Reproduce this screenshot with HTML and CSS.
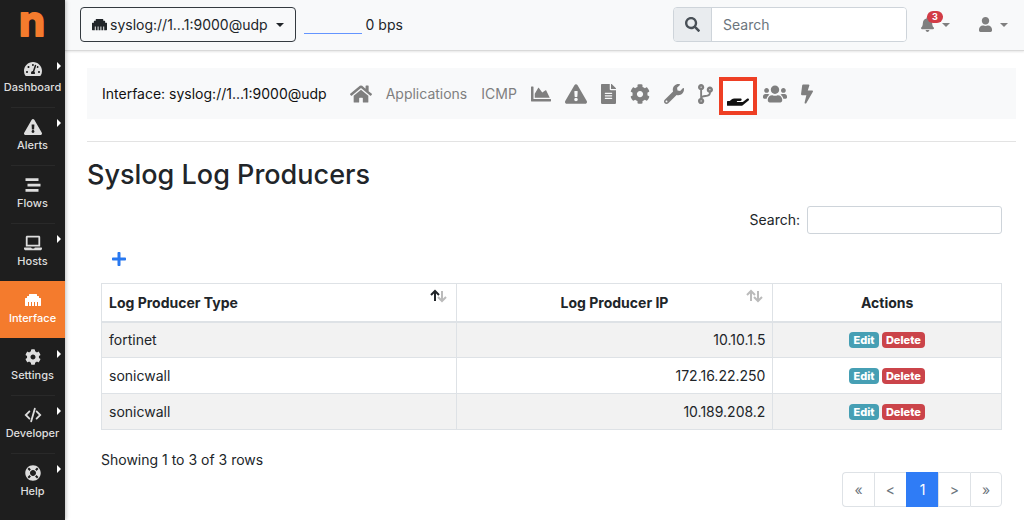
FILE: index.html
```html
<!DOCTYPE html>
<html lang="en">
<head>
  <meta charset="UTF-8">
  <meta name="viewport" content="width=device-width, initial-scale=1">
  <title>Syslog Log Producers</title>
  <link rel="stylesheet" href="styles.css">
</head>
<body>

  <!-- shared icons -->
  <svg class="sprite" aria-hidden="true">
    <symbol id="ethernet" viewBox="0 0 512 512"><path d="M496 192h-48v-48c0-8.800-7.200-16-16-16h-48V80c0-8.800-7.200-16-16-16H144c-8.800 0-16 7.200-16 16v48H80c-8.800 0-16 7.200-16 16v48H16c-8.800 0-16 7.200-16 16v224c0 8.800 7.200 16 16 16h80V320h32v128h64V320h32v128h64V320h32v128h64V320h32v128h80c8.800 0 16-7.200 16-16V208c0-8.800-7.200-16-16-16z"/></symbol>
    <symbol id="warning" viewBox="0 0 576 512"><path d="M569.517 440.013C587.975 472.007 564.806 512 527.940 512H48.054c-36.937 0-59.999-40.055-41.577-71.987L246.423 23.985c18.467-32.009 64.720-31.951 83.154 0l239.940 416.028zM288 354c-25.405 0-46 20.595-46 46s20.595 46 46 46 46-20.595 46-46-20.595-46-46-46zm-43.673-165.346l7.418 136c.347 6.364 5.609 11.346 11.982 11.346h48.546c6.373 0 11.635-4.982 11.982-11.346l7.418-136c.375-6.874-5.098-12.654-11.982-12.654h-63.383c-6.884 0-12.356 5.780-11.981 12.654z"/></symbol>
    <symbol id="cog" viewBox="0 0 512 512"><path d="M487.400 315.700l-42.600-24.600c4.300-23.200 4.300-47 0-70.200l42.600-24.600c4.900-2.800 7.100-8.600 5.500-14-11.100-35.600-30-67.800-54.700-94.600-3.800-4.100-10-5.100-14.800-2.300L380.800 110c-17.900-15.400-38.500-27.300-60.800-35.100V25.800c0-5.600-3.900-10.500-9.400-11.700-36.700-8.200-74.300-7.800-109.200 0-5.500 1.200-9.400 6.100-9.400 11.700V75c-22.200 7.900-42.800 19.800-60.800 35.100L88.700 85.500c-4.900-2.800-11-1.900-14.800 2.300-24.700 26.700-43.600 58.900-54.700 94.600-1.700 5.400.6 11.200 5.500 14L67.300 221c-4.300 23.200-4.300 47 0 70.200l-42.600 24.600c-4.900 2.800-7.100 8.600-5.500 14 11.100 35.600 30 67.800 54.700 94.600 3.800 4.100 10 5.100 14.800 2.300l42.600-24.600c17.900 15.400 38.500 27.300 60.800 35.100v49.200c0 5.600 3.900 10.500 9.400 11.700 36.700 8.200 74.300 7.800 109.200 0 5.500-1.200 9.400-6.100 9.400-11.700v-49.200c22.200-7.900 42.800-19.800 60.800-35.100l42.600 24.600c4.900 2.800 11 1.900 14.800-2.300 24.700-26.700 43.600-58.900 54.700-94.600 1.500-5.500-.7-11.300-5.600-14.100zM256 336c-44.100 0-80-35.900-80-80s35.900-80 80-80 80 35.900 80 80-35.900 80-80 80z"/></symbol>
    <symbol id="sort" viewBox="0 0 18 14"><path class="up" d="M5 12V2M1 6l4-4 4 4"/><path class="down" d="M12 2v10M8 8l4 4 4-4"/></symbol>
  </svg>

  <aside class="sidebar">
    <a class="logo" href="#"><svg viewBox="0 0 65 50"><text x="32" y="36">n</text></svg></a>
    <nav>
      <ul class="menu">
        <li class="has-sub"><a href="#">
          <svg viewBox="0 0 576 512"><path d="M288 32C128.940 32 0 160.940 0 320c0 52.800 14.250 102.260 39.060 144.800 5.610 9.620 16.300 15.200 27.440 15.200h443c11.140 0 21.830-5.580 27.440-15.200C561.750 422.260 576 372.800 576 320c0-159.060-128.940-288-288-288zm0 64c14.710 0 26.580 10.130 30.320 23.650-1.110 2.260-2.640 4.230-3.450 6.670l-9.220 27.670c-5.130 3.490-10.970 6.010-17.640 6.010-17.670 0-32-14.330-32-32S270.330 96 288 96zM96 384c-17.670 0-32-14.330-32-32s14.330-32 32-32 32 14.330 32 32-14.330 32-32 32zm48-160c-17.670 0-32-14.330-32-32s14.330-32 32-32 32 14.330 32 32-14.330 32-32 32zm246.770-72.410l-61.330 184C343.130 347.330 352 364.540 352 384c0 11.720-3.380 22.550-8.880 32H232.880c-5.500-9.450-8.880-20.280-8.880-32 0-33.940 26.500-61.430 59.900-63.590l61.340-184.010c4.170-12.560 17.730-19.450 30.360-15.170 12.570 4.190 19.350 17.790 15.170 30.360zm14.660 57.200l15.520-46.550c3.470-1.290 7.130-2.230 11.050-2.230 17.670 0 32 14.330 32 32s-14.330 32-32 32c-11.380-.01-20.890-6.280-26.570-15.220zM480 384c-17.670 0-32-14.330-32-32s14.330-32 32-32 32 14.330 32 32-14.330 32-32 32z"/></svg>
          Dashboard</a></li>
        <li class="has-sub line"><a href="#"><svg><use href="#warning"/></svg>Alerts</a></li>
        <li class="line"><a href="#">
          <svg viewBox="0 0 512 512"><path d="M16 40h416v88H16zM80 212h416v88H80zM16 384h416v88H16z"/></svg>
          Flows</a></li>
        <li class="has-sub line"><a href="#">
          <svg viewBox="0 0 640 512"><path d="M624 416H381.540c-.74 19.810-14.710 32-32.740 32H288c-18.690 0-33.020-17.470-32.770-32H16c-8.800 0-16 7.200-16 16v16c0 35.200 28.800 64 64 64h512c35.200 0 64-28.800 64-64v-16c0-8.800-7.200-16-16-16zM576 48c0-26.400-21.600-48-48-48H112C85.600 0 64 21.600 64 48v336h512V48zm-64 272H128V64h384v256z"/></svg>
          Hosts</a></li>
        <li class="active"><a href="#"><svg><use href="#ethernet"/></svg>Interface</a></li>
        <li class="has-sub"><a href="#"><svg><use href="#cog"/></svg>Settings</a></li>
        <li class="has-sub line"><a href="#">
          <svg class="stroked" viewBox="0 0 20 16"><path d="M6 4L2 8l4 4M14 4l4 4-4 4M12 1L8 15"/></svg>
          Developer</a></li>
        <li class="has-sub line"><a href="#">
          <svg viewBox="0 0 512 512"><path d="M256 8C119.033 8 8 119.033 8 256s111.033 248 248 248 248-111.033 248-248S392.967 8 256 8zm173.696 119.559l-63.399 63.399c-10.987-18.559-26.670-34.252-45.255-45.255l63.399-63.399a218.396 218.396 0 0 1 45.255 45.255zM256 352c-53.019 0-96-42.981-96-96s42.981-96 96-96 96 42.981 96 96-42.981 96-96 96zM127.559 82.304l63.399 63.399c-18.559 10.987-34.252 26.670-45.255 45.255l-63.399-63.399a218.372 218.372 0 0 1 45.255-45.255zM82.304 384.441l63.399-63.399c10.987 18.559 26.670 34.252 45.255 45.255l-63.399 63.399a218.396 218.396 0 0 1-45.255-45.255zm302.137 45.255l-63.399-63.399c18.559-10.987 34.252-26.670 45.255-45.255l63.399 63.399a218.403 218.403 0 0 1-45.255 45.255z"/></svg>
          Help</a></li>
      </ul>
    </nav>
  </aside>

  <div class="page">
    <header class="topbar">
      <button type="button" class="iface-btn"><svg><use href="#ethernet"/></svg>syslog://1...1:9000@udp<span class="caret"></span></button>
      <div class="traffic"><span class="chart"></span>0 bps</div>
      <form class="search">
        <label for="search"><svg viewBox="0 0 512 512" aria-label="Search"><path d="M505 442.700L405.300 343c-4.500-4.500-10.600-7-17-7H372c27.600-35.300 44-79.700 44-128C416 93.100 322.900 0 208 0S0 93.100 0 208s93.100 208 208 208c48.300 0 92.700-16.400 128-44v16.300c0 6.400 2.500 12.500 7 17l99.700 99.700c9.400 9.400 24.600 9.400 33.900 0l28.300-28.300c9.400-9.400 9.400-24.600.1-34zM208 336c-70.700 0-128-57.200-128-128 0-70.700 57.200-128 128-128 70.700 0 128 57.200 128 128 0 70.700-57.200 128-128 128z"/></svg></label>
        <input type="text" id="search" placeholder="Search">
      </form>
      <button type="button" class="icon-btn bell" aria-label="Notifications">
        <svg viewBox="0 0 448 512"><path d="M224 512c35.320 0 63.970-28.650 63.970-64H160.030c0 35.350 28.650 64 63.970 64zm215.390-149.710c-19.320-20.760-55.470-51.990-55.470-154.290 0-77.700-54.480-139.900-127.940-155.160V32c0-17.670-14.320-32-31.980-32s-31.980 14.330-31.980 32v20.840C118.560 68.100 64.080 130.300 64.080 208c0 102.300-36.150 133.530-55.470 154.290-6 6.450-8.660 14.160-8.610 21.710.11 16.400 12.980 32 32.100 32h383.800c19.120 0 32-15.600 32.100-32 .05-7.550-2.610-15.270-8.610-21.710z"/></svg>
        <span class="count">3</span><span class="caret"></span>
      </button>
      <button type="button" class="icon-btn" aria-label="Account">
        <svg viewBox="0 0 448 512"><path d="M224 256c70.700 0 128-57.300 128-128S294.700 0 224 0 96 57.300 96 128s57.300 128 128 128zm89.600 32h-16.700c-22.200 10.200-46.900 16-72.900 16s-50.600-5.800-72.900-16h-16.700C60.200 288 0 348.200 0 422.400V464c0 26.500 21.500 48 48 48h352c26.500 0 48-21.500 48-48v-41.600c0-74.200-60.200-134.400-134.400-134.400z"/></svg>
        <span class="caret"></span>
      </button>
    </header>

    <main>
      <nav class="tabs">
        <span class="title">Interface: syslog://1...1:9000@udp</span>
        <a href="#" aria-label="Home"><svg class="w22" viewBox="0 0 576 512"><path d="M280.370 148.260L96 300.110V464a16 16 0 0 0 16 16l112.060-.29a16 16 0 0 0 15.920-16V368a16 16 0 0 1 16-16h64a16 16 0 0 1 16 16v95.640a16 16 0 0 0 16 16.050L464 480a16 16 0 0 0 16-16V300L295.670 148.260a12.190 12.190 0 0 0-15.300 0zM571.600 251.470L488 182.560V44.050a12 12 0 0 0-12-12h-56a12 12 0 0 0-12 12v72.610L318.470 43a48 48 0 0 0-61 0L4.340 251.470a12 12 0 0 0-1.600 16.900l25.500 31A12 12 0 0 0 45.150 301l235.220-193.740a12.190 12.190 0 0 1 15.300 0L530.900 301a12 12 0 0 0 16.900-1.600l25.500-31a12 12 0 0 0-1.700-16.930z"/></svg></a>
        <a href="#">Applications</a>
        <a href="#">ICMP</a>
        <a href="#" aria-label="Charts"><svg class="w20" viewBox="0 0 512 512"><path d="M500 384c6.600 0 12 5.400 12 12v40c0 6.600-5.400 12-12 12H12c-6.600 0-12-5.400-12-12V76c0-6.600 5.400-12 12-12h40c6.600 0 12 5.400 12 12v308h436zM372.700 159.500L288 216l-85.300-113.700c-5.100-6.800-15.500-6.300-19.900 1L96 248v104h384l-89.900-187.800c-3.200-6.500-11.400-8.700-17.400-4.700z"/></svg></a>
        <a href="#" aria-label="Alerts"><svg class="w22"><use href="#warning"/></svg></a>
        <a href="#" aria-label="Reports"><svg class="w15" viewBox="0 0 384 512"><path d="M224 136V0H24C10.700 0 0 10.700 0 24v464c0 13.300 10.700 24 24 24h336c13.300 0 24-10.700 24-24V160H248c-13.200 0-24-10.800-24-24zm64 236c0 6.600-5.400 12-12 12H108c-6.600 0-12-5.400-12-12v-8c0-6.600 5.400-12 12-12h168c6.600 0 12 5.400 12 12v8zm0-64c0 6.600-5.400 12-12 12H108c-6.600 0-12-5.400-12-12v-8c0-6.600 5.400-12 12-12h168c6.600 0 12 5.400 12 12v8zm0-72v8c0 6.600-5.400 12-12 12H108c-6.600 0-12-5.400-12-12v-8c0-6.600 5.400-12 12-12h168c6.600 0 12 5.400 12 12zm96-114.100v6.100H256V0h6.100c6.400 0 12.500 2.500 17 7l97.900 98c4.500 4.500 7 10.600 7 16.900z"/></svg></a>
        <a href="#" aria-label="Settings"><svg class="w20"><use href="#cog"/></svg></a>
        <a href="#" aria-label="Tools"><svg class="w20" viewBox="0 0 512 512"><path d="M507.730 109.100c-2.240-9.030-13.540-12.090-20.120-5.510l-74.360 74.360-67.880-11.310-11.310-67.880 74.360-74.360c6.620-6.620 3.430-17.900-5.660-20.160-47.380-11.740-99.550.91-136.580 37.930-39.640 39.640-50.550 97.100-34.050 147.200L18.740 402.760c-24.990 24.990-24.990 65.510 0 90.500 24.990 24.990 65.510 24.990 90.500 0l213.210-213.210c50.120 16.710 107.470 5.680 147.370-34.220 37.070-37.070 49.700-89.320 37.910-136.730zM64 472c-13.250 0-24-10.750-24-24 0-13.260 10.750-24 24-24s24 10.740 24 24c0 13.250-10.750 24-24 24z"/></svg></a>
        <a href="#" aria-label="Disaggregation"><svg class="w15" viewBox="0 0 384 512"><path d="M384 144c0-44.200-35.800-80-80-80s-80 35.800-80 80c0 36.400 24.300 67.100 57.500 76.800-.6 16.100-4.200 28.500-11 36.900-15.400 19.200-49.300 22.400-85.200 25.700-28.200 2.600-57.400 5.400-81.300 16.900v-144c32.500-10.200 56-40.500 56-76.300 0-44.200-35.800-80-80-80S0 35.800 0 80c0 35.800 23.500 66.100 56 76.300v199.300C23.500 365.900 0 396.200 0 432c0 44.200 35.800 80 80 80s80-35.800 80-80c0-34-21.200-63.100-51.200-74.600 3.100-5.200 7.800-9.800 14.900-13.400 16.200-8.200 40.400-10.400 66.100-12.800 42.200-3.900 90-8.400 118.200-43.400 14-17.400 21.100-39.800 21.600-67.900 31.600-10.800 54.400-40.700 54.400-75.900zM80 64c8.800 0 16 7.200 16 16s-7.200 16-16 16-16-7.200-16-16 7.200-16 16-16zm0 384c-8.800 0-16-7.200-16-16s7.200-16 16-16 16 7.200 16 16-7.200 16-16 16zm224-320c8.800 0 16 7.200 16 16s-7.200 16-16 16-16-7.200-16-16 7.200-16 16-16z"/></svg></a>
        <a href="#" class="current" aria-label="Log producers"><svg class="w22" viewBox="0 0 576 512"><path d="M565.300 328.100c-11.800-10.700-30.200-10-42.600 0L430.300 402c-11.300 9.100-25.400 14-40 14H272c-8.800 0-16-7.200-16-16s7.200-16 16-16h78.300c15.900 0 30.700-10.900 33.300-26.600 3.300-20-12.100-37.400-31.600-37.400H192c-27 0-53.100 9.300-74.100 26.300L71.400 384H16c-8.800 0-16 7.200-16 16v96c0 8.800 7.200 16 16 16h356.800c14.500 0 28.600-4.900 40-14L564 377c15.200-12.100 16.400-35.300 1.300-48.900z"/></svg></a>
        <a href="#" aria-label="Pools"><svg class="w24" viewBox="0 0 640 512"><path d="M96 224c35.300 0 64-28.700 64-64s-28.700-64-64-64-64 28.700-64 64 28.700 64 64 64zm448 0c35.300 0 64-28.700 64-64s-28.700-64-64-64-64 28.700-64 64 28.700 64 64 64zm32 32h-64c-17.600 0-33.500 7.100-45.100 18.600 40.300 22.100 68.900 62 75.100 109.400h66c17.700 0 32-14.300 32-32v-32c0-35.300-28.700-64-64-64zm-256 0c61.900 0 112-50.100 112-112S381.900 32 320 32 208 82.100 208 144s50.100 112 112 112zm76.800 32h-8.300c-20.800 10-43.900 16-68.500 16s-47.600-6-68.500-16h-8.300C179.600 288 128 339.600 128 403.200V432c0 26.500 21.500 48 48 48h288c26.500 0 48-21.500 48-48v-28.800c0-63.600-51.600-115.200-115.200-115.200zm-223.700-13.400C161.500 263.100 145.600 256 128 256H64c-35.300 0-64 28.700-64 64v32c0 17.700 14.300 32 32 32h65.900c6.300-47.400 34.900-87.300 75.200-109.400z"/></svg></a>
        <a href="#" aria-label="Scripts"><svg class="w12" viewBox="0 0 320 512"><path d="M296 160H180.600l42.600-129.800C227.200 15 215.700 0 200 0H56C44 0 33.800 8.900 32.200 20.800l-32 240C-1.700 275.200 9.500 288 24 288h118.700L96.600 482.500c-3.600 15.200 8 29.500 23.300 29.500 8.400 0 16.400-4.400 20.800-12l176-304c9.300-15.900-2.200-36-20.700-36z"/></svg></a>
      </nav>
      <hr>
      <h2>Syslog Log Producers</h2>

      <section class="content">
        <div class="filter">
          <label for="filter">Search:</label>
          <input type="text" id="filter">
        </div>
        <button type="button" class="add" aria-label="Add producer"><svg viewBox="0 0 448 512"><path d="M416 208H272V64c0-17.670-14.330-32-32-32h-32c-17.670 0-32 14.330-32 32v144H32c-17.670 0-32 14.330-32 32v32c0 17.670 14.330 32 32 32h144v144c0 17.670 14.330 32 32 32h32c17.670 0 32-14.330 32-32V304h144c17.670 0 32-14.330 32-32v-32c0-17.670-14.330-32-32-32z"/></svg></button>

        <table>
          <colgroup><col class="col-type"><col class="col-ip"><col></colgroup>
          <thead>
            <tr>
              <th class="left">Log Producer Type<svg class="sort asc"><use href="#sort"/></svg></th>
              <th>Log Producer IP<svg class="sort"><use href="#sort"/></svg></th>
              <th>Actions</th>
            </tr>
          </thead>
          <tbody>
            <tr><td>fortinet</td><td class="ip">10.10.1.5</td><td class="actions"><a href="#" class="badge edit">Edit</a> <a href="#" class="badge delete">Delete</a></td></tr>
            <tr><td>sonicwall</td><td class="ip">172.16.22.250</td><td class="actions"><a href="#" class="badge edit">Edit</a> <a href="#" class="badge delete">Delete</a></td></tr>
            <tr><td>sonicwall</td><td class="ip">10.189.208.2</td><td class="actions"><a href="#" class="badge edit">Edit</a> <a href="#" class="badge delete">Delete</a></td></tr>
          </tbody>
        </table>

        <p class="info">Showing 1 to 3 of 3 rows</p>
        <ul class="pagination">
          <li><a href="#">«</a></li>
          <li><a href="#">&lt;</a></li>
          <li><a href="#" class="on">1</a></li>
          <li><a href="#">&gt;</a></li>
          <li><a href="#">»</a></li>
        </ul>
      </section>
    </main>
  </div>

</body>
</html>
```
FILE: styles.css
```css
* {
  box-sizing: border-box;
}
body {
  margin: 0;
  display: flex;
  min-height: 100vh;
  background: #fff;
  color: #212529;
  font-family: Inter, "Liberation Sans", sans-serif;
  font-size: 14px;
  line-height: 20px;
}
a {
  color: inherit;
  text-decoration: none;
}
button, input {
  font: inherit;
  color: inherit;
}
svg {
  display: block;
  fill: currentColor;
}
.sprite {
  position: absolute;
  width: 0;
  height: 0;
}
.caret {
  border: 4px solid transparent;
  border-top-color: currentColor;
  border-bottom: 0;
}

/* sidebar */
.sidebar {
  width: 65px;
  flex: none;
  background: #1e1e1e;
  color: #dedede;
  box-shadow: 1px 0 4px rgba(0,0,0,0.25);
  z-index: 1;
}
.logo {
  display: block;
  color: #f47b2d;
}
.logo svg {
  width: 100%;
  height: 50px;
}
.logo text {
  font-size: 42px;
  font-weight: 700;
  text-anchor: middle;
  stroke: currentColor;
  stroke-width: 2;
  stroke-linejoin: round;
}
.menu {
  list-style: none;
  margin: 0;
  padding: 0;
}
.menu li {
  position: relative;
}
.menu a {
  display: flex;
  flex-direction: column;
  align-items: center;
  gap: 2px;
  height: 57px;
  padding-top: 11px;
  font-size: 11px;
  font-weight: 500;
  line-height: 16px;
}
.menu svg {
  width: 18px;
  height: 16px;
}
.menu .line::before {
  content: "";
  display: block;
  width: 44px;
  height: 1px;
  margin: 0 auto;
  background: #292929;
}
.has-sub::after {
  content: "";
  position: absolute;
  right: 4px;
  top: 12px;
  border: 4px solid transparent;
  border-left-color: #fff;
  border-right: 0;
}
.menu .active {
  background: #f47b2d;
  color: #fff;
}
.stroked {
  fill: none;
  stroke: currentColor;
  stroke-width: 2;
  stroke-linecap: round;
}

/* top bar */
.page {
  flex: 1;
  min-width: 0;
}
.topbar {
  display: flex;
  align-items: center;
  padding: 7px 16px 8px 15px;
  background: #f8f9fa;
  border-bottom: 1px solid #d9d9d9;
  box-shadow: 0 1px 2px rgba(0,0,0,0.1);
}
.iface-btn {
  display: flex;
  align-items: center;
  height: 35px;
  padding: 0 11px;
  background: none;
  border: 1px solid #343a40;
  border-radius: 4px;
}
.iface-btn svg {
  width: 15px;
  height: 15px;
  margin-right: 3px;
}
.iface-btn .caret {
  margin-left: 8px;
}
.traffic {
  display: flex;
  align-items: center;
  gap: 4px;
  margin-left: 8px;
}
.chart {
  width: 58px;
  height: 18px;
  border-bottom: 1px solid #6495ff;
}
.search {
  display: flex;
  height: 35px;
  width: 234px;
  margin-left: auto;
  border: 1px solid #ced4da;
  border-radius: 4px;
  overflow: hidden;
}
.search label {
  display: flex;
  align-items: center;
  padding: 0 11px;
  background: #e9ecef;
  border-right: 1px solid #ced4da;
  color: #495057;
}
.search svg {
  width: 15px;
  height: 15px;
}
.search input {
  flex: 1;
  min-width: 0;
  border: 0;
  padding: 0 11px;
  background: #fff;
}
.search input::placeholder {
  color: #6c757d;
  opacity: 1;
}
.icon-btn {
  position: relative;
  display: flex;
  align-items: center;
  gap: 8px;
  margin-left: 29px;
  padding: 0;
  background: none;
  border: 0;
  color: #7f7f7f;
}
.icon-btn svg {
  width: 13px;
  height: 15px;
}
.bell {
  margin-left: 14px;
}
.count {
  position: absolute;
  left: 6px;
  top: -6px;
  padding: 0 5px;
  border-radius: 6px;
  background: #d23c46;
  color: #fff;
  font-size: 9px;
  font-weight: 700;
  line-height: 12px;
}

/* interface tabs */
main {
  padding: 17px 8px 12px 22px;
}
.tabs {
  display: flex;
  align-items: flex-start;
  gap: 14px;
  padding: 9px 15px 4px;
  background: #f8f9fa;
  color: #7f7f7f;
}
.tabs > * {
  display: flex;
  align-items: center;
  height: 33px;
}
.title {
  margin-right: 9px;
  color: #111;
}
.tabs svg {
  height: 20px;
}
.w12 { width: 12px; }
.w15 { width: 15px; }
.w20 { width: 20px; }
.w22 { width: 22px; }
.w24 { width: 24px; }
.tabs .current {
  height: 38px;
  margin: 0 -8px;
  padding: 0 4px;
  border: 4px solid #ee3f24;
  background: #fff;
  color: #111;
}
hr {
  margin: 22px 0 16px;
  border: 0;
  border-top: 1px solid #e3e3e3;
}
h2 {
  margin: 0;
  font-size: 27px;
  font-weight: 500;
  line-height: 34px;
}

/* table */
.content {
  padding: 14px 14px 0;
}
.filter {
  display: flex;
  justify-content: flex-end;
  align-items: center;
  gap: 7px;
}
.filter input {
  width: 195px;
  height: 28px;
  padding: 0 8px;
  border: 1px solid #ced4da;
  border-radius: 3px;
}
.add {
  display: block;
  margin: 16px 0 15px;
  padding: 1px 11px;
  background: none;
  border: 0;
  color: #2878f0;
}
.add svg {
  width: 14px;
  height: 16px;
}
table {
  width: 100%;
  table-layout: fixed;
  border-collapse: collapse;
}
.col-type {
  width: 39.4%;
}
.col-ip {
  width: 35.2%;
}
th, td {
  height: 36px;
  padding: 1px 7px 0;
  border: 1px solid #dee2e6;
}
th {
  position: relative;
  height: 38px;
  border-bottom-width: 2px;
  font-weight: 700;
}
.left {
  text-align: left;
}
.sort {
  position: absolute;
  right: 8px;
  top: 5px;
  width: 18px;
  height: 14px;
  fill: none;
  stroke: #bbb;
  stroke-width: 2;
}
.asc {
  color: #212529;
}
.sort:not(.asc) {
  color: #bbb;
}
.up {
  stroke: currentColor;
}
tbody tr:nth-child(odd) {
  background: #f2f2f2;
}
.ip {
  text-align: right;
}
.actions {
  text-align: center;
  font-size: 12px;
}
.badge {
  display: inline-block;
  padding: 0 4px;
  border-radius: 4px;
  color: #fff;
  font-size: 11px;
  font-weight: 800;
  line-height: 16px;
}
.edit {
  background: #469fb4;
}
.delete {
  background: #cb444a;
}
.info {
  margin: 20px 0 2px;
}
.pagination {
  display: flex;
  justify-content: flex-end;
  list-style: none;
  margin: 0;
  padding: 0;
}
.pagination a {
  display: block;
  width: 32px;
  padding: 7px 0 6px;
  border: 1px solid #dee2e6;
  border-right: 0;
  text-align: center;
  color: #6c757d;
}
.pagination li:first-child a {
  border-radius: 4px 0 0 4px;
}
.pagination li:last-child a {
  border-right: 1px solid #dee2e6;
  border-radius: 0 4px 4px 0;
}
.pagination .on {
  background: #2f7cf6;
  border-color: #2f7cf6;
  color: #fff;
}
```
